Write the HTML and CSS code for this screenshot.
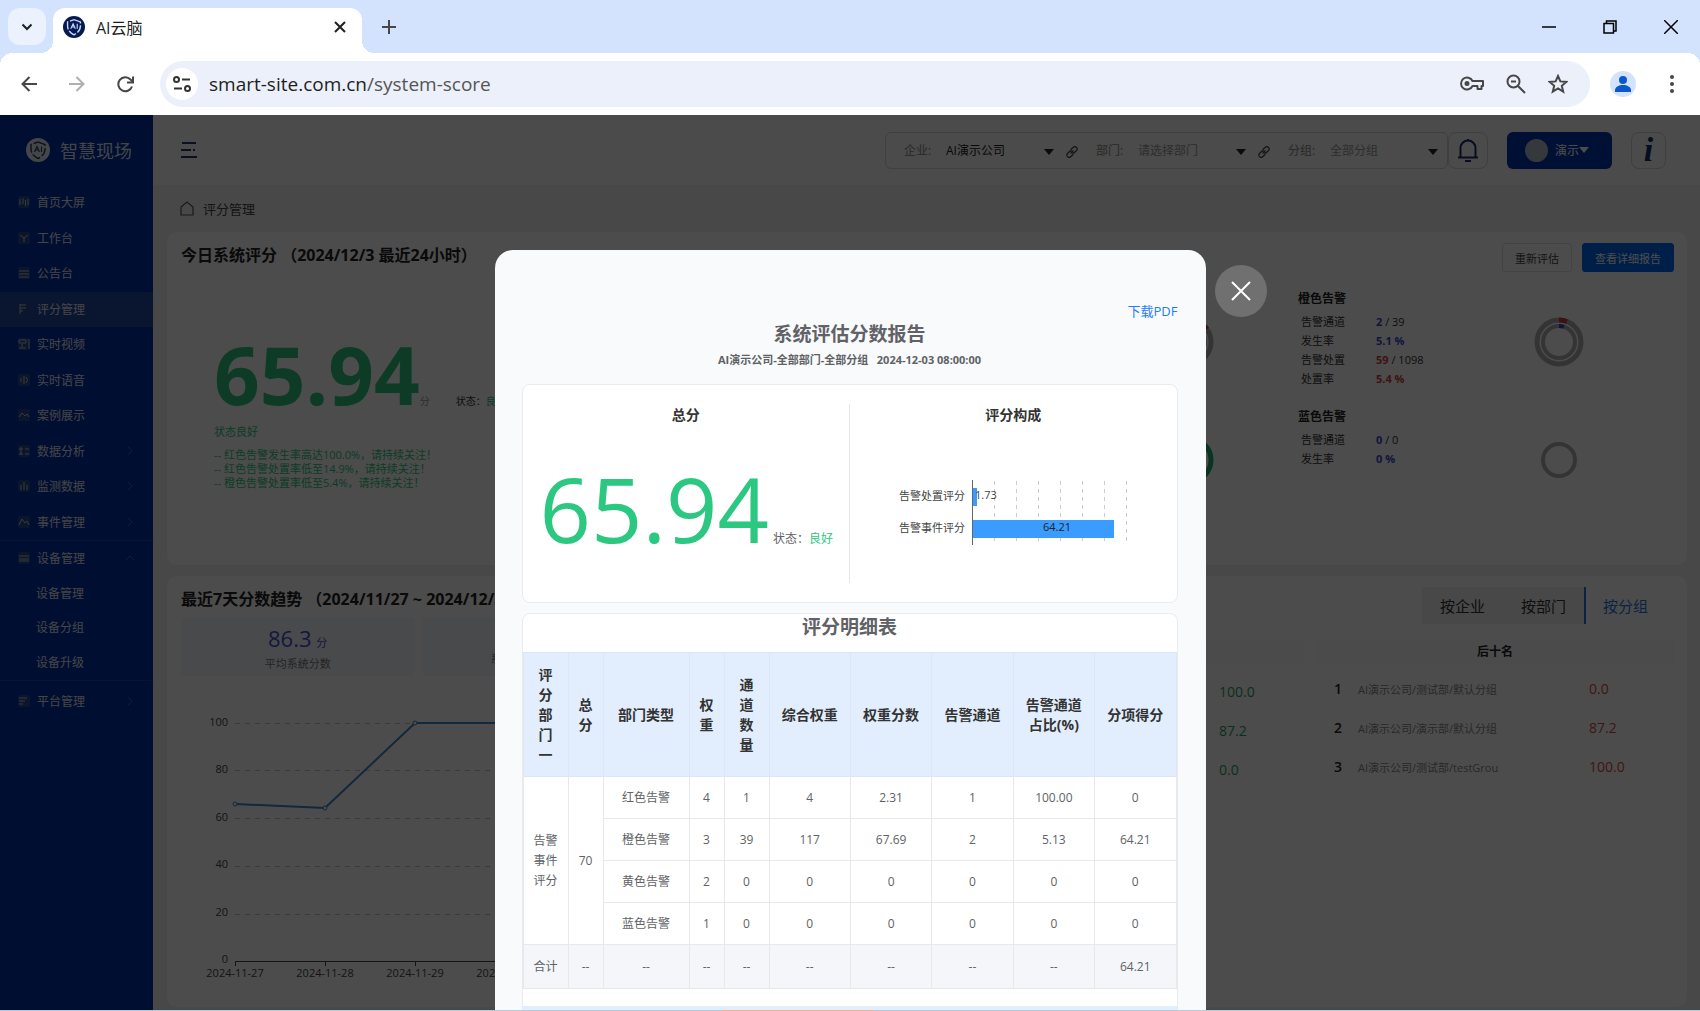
FILE: index.html
```html
<!DOCTYPE html>
<html lang="zh-CN">
<head>
    <meta charset="UTF-8">
    <meta name="viewport" content="width=device-width, initial-scale=1.0">
    <title>AI云脑</title>
    <link rel="stylesheet" href="styles.css">
</head>
<body>
    <svg width="0" height="0" class="defs">
        <symbol id="shield" viewBox="0 0 24 24">
            <path d="M12 4 19 6.500V11c0 4.500-3 7.500-7 9.500-4-2-7-5-7-9.500V6.500z" fill="none" stroke="currentColor" stroke-width="1.500" stroke-dasharray="9 2"/>
            <path d="M8.500 14 11 8.500l2.500 5.500M9.500 12h3M15.500 8.500V14" fill="none" stroke="currentColor" stroke-width="1.200"/>
        </symbol>
        <symbol id="link" viewBox="0 0 12 12">
            <path d="M5 7 7 5M5 3.500 7 1.500a2 2 0 0 1 3.500 3L8.500 6.500a2 2 0 0 1-2 .5M7 8.500 5 10.500a2 2 0 0 1-3.500-3L3.500 5.500a2 2 0 0 1 2-.5" fill="none" stroke="currentColor" stroke-width="1.200" stroke-linecap="round"/>
        </symbol>
        <symbol id="caret" viewBox="0 0 10 6"><path d="M0 0h10L5 6z" fill="currentColor"/></symbol>
        <symbol id="chev" viewBox="0 0 10 10"><path d="M3 1l4 4-4 4" fill="none" stroke="currentColor"/></symbol>
    </svg>

    <!-- browser -->
    <div class="tabstrip">
        <button class="tab-search" aria-label="搜索标签页">
            <svg width="12" height="8" viewBox="0 0 12 8"><path d="M1.500 1.500 6 6l4.500-4.500" fill="none" stroke="#1f1f1f" stroke-width="2"/></svg>
        </button>
        <div class="tab">
            <svg class="favicon" width="22" height="22" viewBox="0 0 24 24"><circle cx="12" cy="12" r="12" fill="#061a4f"/><use href="#shield" color="#c5d7ff"/></svg>
            <span class="tab-title">AI云脑</span>
            <button class="plain" aria-label="关闭标签页">
                <svg width="12" height="12" viewBox="0 0 12 12"><path d="M1 1l10 10M11 1 1 11" stroke="#1f1f1f" stroke-width="2"/></svg>
            </button>
        </div>
        <button class="plain new-tab" aria-label="新标签页">
            <svg width="14" height="14" viewBox="0 0 14 14"><path d="M7 0v14M0 7h14" stroke="#474747" stroke-width="2"/></svg>
        </button>
        <div class="win-controls">
            <button class="plain" aria-label="最小化"><svg width="14" height="14" viewBox="0 0 14 14"><path d="M0 7h14" stroke="#000" stroke-width="1.500"/></svg></button>
            <button class="plain" aria-label="还原"><svg width="14" height="14" viewBox="0 0 14 14"><path d="M1 3.500h9.500V13H1zM3.500 3.500V1H13v10h-2.500" fill="none" stroke="#000" stroke-width="1.500"/></svg></button>
            <button class="plain" aria-label="关闭"><svg width="14" height="14" viewBox="0 0 14 14"><path d="M0 0l14 14M14 0 0 14" stroke="#000" stroke-width="1.500"/></svg></button>
        </div>
    </div>
    <div class="toolbar">
        <button class="plain nav" aria-label="后退"><svg width="16" height="16" viewBox="0 0 16 16"><path d="M16 8H2M8.500 1 1.500 8l7 7" fill="none" stroke="#474747" stroke-width="2"/></svg></button>
        <button class="plain nav" aria-label="前进"><svg width="16" height="16" viewBox="0 0 16 16"><path d="M0 8h14M7.500 1l7 7-7 7" fill="none" stroke="#b0b0b0" stroke-width="2"/></svg></button>
        <button class="plain nav" aria-label="刷新"><svg width="17" height="17" viewBox="0 0 17 17"><path d="M15 10.500a7 7 0 1 1-1.500-7L15 5M16 .5v6h-6" fill="none" stroke="#474747" stroke-width="2"/></svg></button>
        <div class="omnibox">
            <button class="site-info" aria-label="网站信息">
                <svg width="18" height="16" viewBox="0 0 18 16" fill="none" stroke="#333" stroke-width="2"><circle cx="3.500" cy="3.500" r="2.500"/><path d="M9 3.500h8M1 12.500h8"/><circle cx="14.500" cy="12.500" r="2.500"/></svg>
            </button>
            <div class="url">smart-site.com.cn<span>/system-score</span></div>
            <svg width="24" height="16" viewBox="0 0 24 16" fill="none" stroke="#474747" stroke-width="2"><path d="M12.500 5H23v5h-1.500v3h-4v-3h-5a6 6 0 1 1 0-5z" stroke-linejoin="round"/><circle cx="7" cy="7.500" r="1.500" fill="#474747"/></svg>
            <svg width="20" height="20" viewBox="0 0 20 20" fill="none" stroke="#474747" stroke-width="2"><circle cx="7.500" cy="7.500" r="6"/><path d="M12 12l7 7M5 7.500h5"/></svg>
            <svg width="20" height="20" viewBox="0 0 20 20" fill="none" stroke="#474747" stroke-width="2"><path d="M10 2l2.400 5.400 5.900.5-4.500 3.900 1.400 5.800L10 14.500l-5.200 3.100 1.400-5.800L1.700 7.900l5.900-.5z"/></svg>
        </div>
        <button class="profile" aria-label="个人资料"><svg width="16" height="18" viewBox="0 0 16 18" fill="#0b57d0"><circle cx="8" cy="5" r="4"/><path d="M0 17v-2c0-3 4-5 8-5s8 2 8 5v2z"/></svg></button>
        <button class="plain" aria-label="菜单"><svg width="6" height="20" viewBox="0 0 6 20" fill="#474747"><circle cx="3" cy="3" r="2"/><circle cx="3" cy="10" r="2"/><circle cx="3" cy="17" r="2"/></svg></button>
    </div>

    <div class="app">
        <aside class="sidebar">
            <div class="brand">
                <svg width="24" height="24" viewBox="0 0 24 24"><circle cx="12" cy="12" r="12" fill="#e8ecf8"/><use href="#shield" color="#33415f"/></svg>
                <span>智慧现场</span>
            </div>
            <nav>
                <div class="menu menu-main">
                    <a href="#"><svg class="ico" viewBox="0 0 12 12"><path d="M2 3v6M5 2v6M7.500 4v6M10 3v6"/></svg>首页大屏</a>
                    <a href="#"><svg class="ico" viewBox="0 0 12 12"><path d="M2 3l4 3 4-3M6 6v4"/></svg>工作台</a>
                    <a href="#"><svg class="ico" viewBox="0 0 12 12"><path d="M1 4h10M1 7h10M1 10h10"/></svg>公告台</a>
                    <a href="#" class="active"><svg class="ico" viewBox="0 0 12 12"><path d="M2 2h6M2 5h6M2 8h3M2 1v10"/></svg>评分管理</a>
                    <a href="#"><svg class="ico" viewBox="0 0 12 12"><path d="M1 2h7v3H1zM1 10h7M11 1v10M4 6v3"/></svg>实时视频</a>
                    <a href="#"><svg class="ico" viewBox="0 0 12 12"><path d="M3 4v4M6 2v8M8 3q3 3 0 6"/></svg>实时语音</a>
                    <a href="#"><svg class="ico" viewBox="0 0 12 12"><path d="M1 8l3-4 3 3 2-2 2 3"/></svg>案例展示</a>
                    <a href="#"><svg class="ico" viewBox="0 0 12 12"><path d="M1 4h4M7 4h4M1 9h4M7 9h4M3 2v8"/></svg>数据分析<svg class="chev"><use href="#chev"/></svg></a>
                    <a href="#"><svg class="ico" viewBox="0 0 12 12"><path d="M3 5v5M6 2v8M9 5v5"/></svg>监测数据<svg class="chev"><use href="#chev"/></svg></a>
                    <a href="#"><svg class="ico" viewBox="0 0 12 12"><path d="M1 9l3-6 3 4 2-2 2 4"/></svg>事件管理<svg class="chev"><use href="#chev"/></svg></a>
                </div>
                <div class="menu menu-device">
                    <a href="#"><svg class="ico" viewBox="0 0 12 12"><path d="M1 4h10M1 7h10M1 9h10"/></svg>设备管理<svg class="chev up"><use href="#chev"/></svg></a>
                    <a href="#" class="sub">设备管理</a>
                    <a href="#" class="sub">设备分组</a>
                    <a href="#" class="sub">设备升级</a>
                </div>
                <div class="menu menu-platform">
                    <a href="#"><svg class="ico" viewBox="0 0 12 12"><path d="M1 3h8M1 6h6M1 9h4"/></svg>平台管理<svg class="chev"><use href="#chev"/></svg></a>
                </div>
            </nav>
        </aside>

        <main class="main">
            <header class="topbar">
                <button class="plain burger" aria-label="折叠菜单"><svg width="16" height="16" viewBox="0 0 16 16" stroke="#26366f" stroke-width="2"><path d="M1 1h14M0 8h10M12 8h2M0 15h16"/></svg></button>
                <div class="filters">
                    <label for="company">企业:</label>
                    <select id="company" class="chosen"><option>AI演示公司</option></select>
                    <svg class="caret"><use href="#caret"/></svg>
                    <svg class="link"><use href="#link"/></svg>
                    <label for="dept">部门:</label>
                    <select id="dept"><option>请选择部门</option></select>
                    <svg class="caret"><use href="#caret"/></svg>
                    <svg class="link"><use href="#link"/></svg>
                    <label for="group">分组:</label>
                    <select id="group"><option>全部分组</option></select>
                    <svg class="caret"><use href="#caret"/></svg>
                </div>
                <button class="box-btn bell" aria-label="通知"><svg width="22" height="24" viewBox="0 0 22 24" fill="none" stroke="#1e2a66" stroke-width="2"><path d="M1 19.500h20M3.500 19V10a7.500 7.500 0 0 1 15 0v9M8 23h6M11 3V1"/></svg></button>
                <button class="user"><span class="avatar"></span>演示<svg class="caret"><use href="#caret"/></svg></button>
                <button class="box-btn info" aria-label="帮助">i</button>
            </header>

            <div class="crumb">
                <svg width="14" height="15" viewBox="0 0 14 15"><path d="M1 6l6-5 6 5v8H1z" fill="none" stroke="#555" stroke-width="1.200"/></svg>
                <span>评分管理</span>
            </div>

            <section class="card today">
                <div class="card-head">
                    <h2>今日系统评分 （2024/12/3 最近24小时）</h2>
                    <div class="actions">
                        <button class="btn">重新评估</button>
                        <button class="btn primary">查看详细报告</button>
                    </div>
                </div>
                <div class="today-body">
                    <div class="score">
                        <div class="score-line"><strong>65.94</strong><small>分</small><span>状态：<em>良好</em></span></div>
                        <p class="state">状态良好</p>
                        <ul>
                            <li>-- 红色告警发生率高达100.0%，请持续关注！</li>
                            <li>-- 红色告警处置率低至14.9%，请持续关注！</li>
                            <li>-- 橙色告警处置率低至5.4%，请持续关注！</li>
                        </ul>
                    </div>
                    <div class="alarms">
                        <div class="alarm">
                            <svg class="ring" width="50" height="50" viewBox="0 0 50 50" fill="none">
                                <circle cx="25" cy="25" r="22" stroke="#b0b0b0" stroke-width="5"/><circle cx="25" cy="25" r="16" stroke="#b0b0b0" stroke-width="4"/>
                                <path d="M25 3a22 22 0 0 1 18 9" stroke="#b04a50" stroke-width="5"/>
                            </svg>
                        </div>
                        <div class="alarm">
                            <svg class="ring" width="50" height="50" viewBox="0 0 50 50" fill="none"><circle cx="25" cy="25" r="22" stroke="#1fae72" stroke-width="5"/></svg>
                        </div>
                    </div>
                    <div class="alarms">
                        <div class="alarm">
                            <div>
                                <h3>橙色告警</h3>
                                <dl>
                                    <dt>告警通道</dt><dd><b>2</b> / 39</dd>
                                    <dt>发生率</dt><dd><b>5.1 %</b></dd>
                                    <dt>告警处置</dt><dd><b class="red">59</b> / 1098</dd>
                                    <dt>处置率</dt><dd><b class="red">5.4 %</b></dd>
                                </dl>
                            </div>
                            <svg class="ring" width="50" height="50" viewBox="0 0 50 50" fill="none">
                                <circle cx="25" cy="25" r="22" stroke="#b0b0b0" stroke-width="5"/><circle cx="25" cy="25" r="16" stroke="#b0b0b0" stroke-width="4"/>
                                <path d="M25 3q4 0 8 1.500" stroke="#d23b3b" stroke-width="5"/><path d="M25 9q2.500 0 5 1" stroke="#3a48d0" stroke-width="4"/>
                            </svg>
                        </div>
                        <div class="alarm">
                            <div>
                                <h3>蓝色告警</h3>
                                <dl>
                                    <dt>告警通道</dt><dd><b>0</b> / 0</dd>
                                    <dt>发生率</dt><dd><b>0 %</b></dd>
                                </dl>
                            </div>
                            <svg class="ring" width="50" height="50" viewBox="0 0 50 50" fill="none"><circle cx="25" cy="25" r="16" stroke="#b0b0b0" stroke-width="4"/></svg>
                        </div>
                    </div>
                </div>
            </section>

            <section class="card week">
                <div class="trend">
                    <h2>最近7天分数趋势 （2024/11/27 ~ 2024/12/3）</h2>
                    <div class="tiles">
                        <div class="tile"><div><b>86.3</b> 分</div><span>平均系统分数</span></div>
                        <div class="tile"><span class="low">系统分数最高的日期</span></div>
                        <div class="tile"></div>
                    </div>
                    <svg class="line-chart">
                        <g stroke="#c4c4c4" stroke-dasharray="5 5">
                            <path d="M54 47.500H700M54 94.500H700M54 142.500H700M54 190.500H700M54 238.500H700"/>
                        </g>
                        <path d="M54.500 290v-4.500H700M144.500 286v4M234.500 286v4M324.500 286v4" fill="none" stroke="#444"/>
                        <g text-anchor="end">
                            <text x="47" y="50">100</text><text x="47" y="97">80</text><text x="47" y="145">60</text>
                            <text x="47" y="192">40</text><text x="47" y="240">20</text><text x="47" y="287">0</text>
                        </g>
                        <g text-anchor="middle">
                            <text x="54" y="301">2024-11-27</text><text x="144" y="301">2024-11-28</text>
                            <text x="234" y="301">2024-11-29</text><text x="324" y="301">2024-11-30</text>
                        </g>
                        <path d="M54 128l90 4 90-85h90" fill="none" stroke="#3f86c8" stroke-width="2"/>
                        <g fill="#fff" stroke="#3f86c8"><circle cx="54" cy="128" r="2"/><circle cx="144" cy="132" r="2"/><circle cx="234" cy="47" r="2"/></g>
                    </svg>
                </div>
                <div class="rank">
                    <div class="tabs">
                        <button>按企业</button><button>按部门</button><button class="on">按分组</button>
                    </div>
                    <div class="lists">
                        <div class="list best">
                            <h4>前十名</h4>
                            <ol>
                                <li><i>1</i><span></span><b>100.0</b></li>
                                <li><i>2</i><span></span><b>87.2</b></li>
                                <li><i>3</i><span></span><b>0.0</b></li>
                            </ol>
                        </div>
                        <div class="list worst">
                            <h4>后十名</h4>
                            <ol>
                                <li><i>1</i><span>AI演示公司/测试部/默认分组</span><b>0.0</b></li>
                                <li><i>2</i><span>AI演示公司/演示部/默认分组</span><b>87.2</b></li>
                                <li><i>3</i><span>AI演示公司/测试部/testGrou</span><b>100.0</b></li>
                            </ol>
                        </div>
                    </div>
                </div>
            </section>
        </main>

        <div class="overlay">
            <div class="modal" role="dialog" aria-labelledby="report-title">
                <button class="close" aria-label="关闭报告"><svg width="20" height="20" viewBox="0 0 20 20"><path d="M1 1l18 18M19 1 1 19" stroke="#fff" stroke-width="2"/></svg></button>
                <a href="#" class="download">下载PDF</a>
                <h1 id="report-title">系统评估分数报告</h1>
                <p class="subtitle">AI演示公司-全部部门-全部分组 &nbsp; 2024-12-03 08:00:00</p>

                <div class="panel summary">
                    <div class="half">
                        <h3>总分</h3>
                        <div class="total"><strong>65.94</strong><span>状态：<em>良好</em></span></div>
                    </div>
                    <div class="half">
                        <h3>评分构成</h3>
                        <svg class="bar-chart" width="240" height="70" viewBox="0 0 240 70">
                            <path d="M104.500 2v62M126.500 2v62M148.500 2v62M170.500 2v62M192.500 2v62M214.500 2v62M236.500 2v62" stroke="#ccc" stroke-dasharray="4 4"/>
                            <rect x="83" y="9" width="4" height="18" fill="#3a9cff"/>
                            <rect x="83" y="41" width="141" height="18" fill="#3a9cff"/>
                            <path d="M82.500 1v65" stroke="#666"/>
                            <g text-anchor="end"><text x="75" y="21">告警处置评分</text><text x="75" y="53">告警事件评分</text></g>
                            <text x="85" y="20">1.73</text>
                            <text x="167" y="52" text-anchor="middle" class="on-bar">64.21</text>
                        </svg>
                    </div>
                </div>

                <div class="panel detail">
                    <h1>评分明细表</h1>
                    <table>
                        <colgroup>
                            <col class="c-m"><col class="c-s"><col class="c-l"><col class="c-s"><col class="c-m">
                            <col><col><col><col><col>
                        </colgroup>
                        <thead>
                            <tr>
                                <th>评分部门一</th><th>总分</th><th>部门类型</th><th>权重</th><th>通道数量</th>
                                <th>综合权重</th><th>权重分数</th><th>告警通道</th><th>告警通道占比(%)</th><th>分项得分</th>
                            </tr>
                        </thead>
                        <tbody>
                            <tr>
                                <td rowspan="4">告警事件评分</td><td rowspan="4">70</td>
                                <td>红色告警</td><td>4</td><td>1</td><td>4</td><td>2.31</td><td>1</td><td>100.00</td><td>0</td>
                            </tr>
                            <tr><td>橙色告警</td><td>3</td><td>39</td><td>117</td><td>67.69</td><td>2</td><td>5.13</td><td>64.21</td></tr>
                            <tr><td>黄色告警</td><td>2</td><td>0</td><td>0</td><td>0</td><td>0</td><td>0</td><td>0</td></tr>
                            <tr><td>蓝色告警</td><td>1</td><td>0</td><td>0</td><td>0</td><td>0</td><td>0</td><td>0</td></tr>
                            <tr class="sum"><td>合计</td><td>--</td><td>--</td><td>--</td><td>--</td><td>--</td><td>--</td><td>--</td><td>--</td><td>64.21</td></tr>
                        </tbody>
                    </table>
                    <div class="next-table"></div>
                </div>
            </div>
        </div>
    </div>
    <div class="taskbar"><span></span></div>
</body>
</html>
```

FILE: styles.css
```css
* {
    box-sizing: border-box;
}
body {
    margin: 0;
    height: 100vh;
    display: flex;
    flex-direction: column;
    overflow: hidden;
    font-family: "Open Sans", "Noto Sans CJK SC", sans-serif;
    font-size: 12px;
    color: #333;
}
h1, h2, h3, h4, p, ul, ol, dl, dd {
    margin: 0;
    padding: 0;
    list-style: none;
}
button, select {
    font: inherit;
    color: inherit;
    border: none;
    padding: 0;
    cursor: pointer;
}
a {
    text-decoration: none;
}
em, i {
    font-style: normal;
}
svg {
    flex: none;
    display: block;
}
.defs {
    position: absolute;
}
.plain {
    background: none;
}

/* browser */
.tabstrip {
    height: 53px;
    flex: none;
    display: flex;
    align-items: center;
    background: #d3e3fd;
    padding: 0 22px 0 8px;
}
.tab-search {
    width: 38px;
    height: 37px;
    border-radius: 12px;
    background: #ebf1fd;
    display: flex;
    align-items: center;
    justify-content: center;
}
.tab {
    position: relative;
    align-self: flex-end;
    width: 309px;
    height: 45px;
    margin-left: 7px;
    padding: 0 16px 8px 10px;
    display: flex;
    align-items: center;
    background: #fff;
    border-radius: 12px 12px 0 0;
}
/* curved feet of the active tab */
.tab::before, .tab::after {
    content: "";
    position: absolute;
    bottom: 0;
    width: 12px;
    height: 12px;
}
.tab::before {
    right: 100%;
    background: radial-gradient(circle at 0 0, transparent 12px, #fff 12px);
}
.tab::after {
    left: 100%;
    background: radial-gradient(circle at 100% 0, transparent 12px, #fff 12px);
}
.tab-title {
    flex: 1;
    margin-left: 11px;
    font-size: 16px;
    color: #1f1f1f;
}
.new-tab {
    margin-left: 20px;
}
.win-controls {
    margin-left: auto;
    display: flex;
    gap: 47px;
}
.toolbar {
    height: 62px;
    flex: none;
    display: flex;
    align-items: center;
    padding: 0 25px 0 5px;
    background: radial-gradient(circle at 12px 12px, #fff 12px, transparent 12px) 0 0 / 12px 12px no-repeat,
        radial-gradient(circle at 0 12px, #fff 12px, transparent 12px) 100% 0 / 12px 12px no-repeat,
        linear-gradient(#fff, #fff) 12px 0 / calc(100% - 24px) 12px no-repeat,
        linear-gradient(#d3e3fd 12px, #fff 12px);
}
.toolbar .nav {
    width: 48px;
    display: flex;
    justify-content: center;
}
.omnibox {
    flex: 1;
    height: 46px;
    margin: 0 20px 0 11px;
    padding: 0 22px 0 6px;
    display: flex;
    align-items: center;
    gap: 22px;
    background: #ebf0fa;
    border-radius: 23px;
}
.site-info {
    width: 32px;
    height: 32px;
    border-radius: 50%;
    background: #fff;
    display: flex;
    align-items: center;
    justify-content: center;
}
.url {
    flex: 1;
    margin-left: -11px;
    font-size: 19px;
    color: #1f1f1f;
}
.url span {
    color: #555;
}
.profile {
    width: 26px;
    height: 26px;
    margin-right: 33px;
    border-radius: 50%;
    background: #d3e3fd;
    display: flex;
    align-items: center;
    justify-content: center;
}

/* app */
.app {
    position: relative;
    flex: 1;
    min-height: 0;
    display: flex;
    background: #f2f2f2;
}
.sidebar {
    width: 153px;
    flex: none;
    background: #0030a4;
    color: #dde3f2;
}
.brand {
    height: 69px;
    display: flex;
    align-items: center;
    gap: 10px;
    padding-left: 26px;
    margin-bottom: 1px;
    font-size: 18px;
}
.menu {
    display: flex;
    flex-direction: column;
}
.menu a {
    flex: 1;
    display: flex;
    align-items: center;
    padding: 0 18px 1px;
    color: #e4e6ec;
    font-size: 12px;
}
.menu a.sub {
    padding-left: 36px;
}
.menu a.active {
    background: #2448a0;
}
.menu-main {
    height: 355px;
}
.menu-device {
    height: 141px;
    border-top: 1px solid #1f48a4;
    border-bottom: 1px solid #1f48a4;
}
.menu-platform {
    height: 40px;
}
.ico {
    width: 12px;
    height: 12px;
    margin-right: 7px;
    background: #2b4a90;
    border-radius: 2px;
    fill: none;
    stroke: #b9c2d9;
}
.chev {
    width: 10px;
    height: 10px;
    margin-left: auto;
    color: #4562ac;
}
.chev.up {
    transform: rotate(-90deg);
}
.main {
    flex: 1;
    min-width: 0;
    display: flex;
    flex-direction: column;
}
.topbar {
    height: 70px;
    flex: none;
    display: flex;
    align-items: center;
    padding: 0 34px 0 28px;
    background: #fafafa;
}
.filters {
    height: 37px;
    margin-left: auto;
    padding: 0 9px 0 18px;
    display: flex;
    align-items: center;
    border: 1px solid #d4d4d4;
    border-radius: 6px;
    color: #888;
}
.filters label {
    width: 42px;
}
.filters select {
    width: 98px;
    appearance: none;
    background: none;
    color: #999;
}
.filters select.chosen {
    color: #222;
}
.caret {
    width: 10px;
    height: 6px;
    color: #222;
}
.filters .caret {
    margin-top: 4px;
}
.link {
    width: 12px;
    height: 12px;
    margin: 4px 18px 0 12px;
    color: #444;
}
.box-btn {
    height: 37px;
    border: 1px solid #d4d4d4;
    border-radius: 8px;
    background: none;
    display: flex;
    align-items: center;
    justify-content: center;
}
.bell {
    width: 40px;
}
.user {
    width: 105px;
    height: 37px;
    margin: 0 19px;
    padding-left: 18px;
    display: flex;
    align-items: center;
    background: #0034b0;
    color: #fff;
    border-radius: 6px;
}
.user .caret {
    color: #fff;
}
.avatar {
    width: 23px;
    height: 23px;
    margin-right: 7px;
    border-radius: 50%;
    background: #b3bfc8;
}
.info {
    width: 35px;
    font: italic bold 34px "Liberation Serif", serif;
    color: #0e2f66;
}
.crumb {
    height: 47px;
    flex: none;
    display: flex;
    align-items: center;
    gap: 9px;
    padding-left: 27px;
    font-size: 13px;
    color: #444;
}
.card {
    margin: 0 13px 11px 14px;
    padding: 11px 13px 0 14px;
    background: #fff;
    border-radius: 10px;
}
.card h2 {
    font-size: 16px;
    line-height: 24px;
    color: #222;
}
.today {
    height: 333px;
    flex: none;
}
.card-head {
    display: flex;
    justify-content: space-between;
    height: 45px;
}
.actions {
    display: flex;
    gap: 10px;
}
.btn {
    height: 29px;
    padding: 0 12px;
    border: 1px solid #e2e2e2;
    border-radius: 3px;
    background: #fff;
    font-size: 11px;
    color: #444;
}
.btn.primary {
    background: #0068f0;
    border-color: #0068f0;
    color: #fff;
}
.today-body {
    display: grid;
    grid-template-columns: 1fr 370px 370px;
    padding-right: 6px;
}
.score {
    padding: 46px 0 0 33px;
    font-size: 11px;
    color: #2cc780;
}
.score-line {
    display: flex;
    align-items: baseline;
    height: 90px;
}
.score-line strong {
    font-size: 80px;
    line-height: 80px;
}
.score-line small {
    font-size: 10px;
    color: #999;
}
.score-line span {
    margin-left: 26px;
    font-size: 10px;
    color: #333;
}
.score-line em, .total em {
    color: #2cc780;
}
.state {
    line-height: 16px;
}
.score ul {
    margin-top: 8px;
}
.score li {
    line-height: 14px;
}
.alarm {
    height: 118px;
    display: flex;
    justify-content: space-between;
}
.ring {
    margin: 29px 84px 0 auto;
}
.alarm h3 {
    font-size: 12px;
    line-height: 22px;
    color: #222;
}
.alarm dl {
    display: grid;
    grid-template-columns: 75px 1fr;
    padding-left: 3px;
    margin-top: 2px;
    font-size: 11px;
    line-height: 19px;
}
.alarm b {
    color: #3a48c8;
}
.alarm .red {
    color: #d04040;
}
.week {
    flex: 1;
    margin-bottom: 3px;
    display: grid;
    grid-template-columns: 1fr 1fr;
    gap: 37px;
}
.tiles {
    display: grid;
    grid-template-columns: 1fr 1fr 1fr;
    gap: 9px;
    height: 58px;
    margin-top: 7px;
    padding-right: 10px;
}
.tile {
    background: #f6f7fc;
    text-align: center;
    font-size: 11px;
    color: #4a4fd0;
    padding-top: 6px;
}
.tile b {
    margin-right: 2px;
    font-size: 22px;
    font-weight: 400;
}
.tile div {
    line-height: 28px;
}
.tile span {
    display: block;
    line-height: 14px;
    color: #777;
}
.tile .low {
    margin-top: 28px;
}
.line-chart {
    width: 100%;
    height: 320px;
    font-size: 11px;
    fill: #444;
}
.tabs {
    display: flex;
    justify-content: flex-end;
    padding-right: 9px;
}
.tabs button {
    width: 81px;
    height: 37px;
    background: #f0f0f0;
    font-size: 15px;
}
.tabs .on {
    background: #fff;
    border-left: 2px solid #2d74e0;
    color: #2d74e0;
}
.lists {
    display: grid;
    grid-template-columns: 1fr 1fr;
    gap: 12px;
    margin-top: 16px;
}
.list h4 {
    font-size: 12px;
    line-height: 24px;
    text-align: center;
    background: #fbfbfb;
    color: #222;
}
.list ol {
    padding: 5px 0 0 18px;
}
.best ol {
    padding-top: 8px;
}
.list li {
    display: grid;
    grid-template-columns: 24px 1fr 85px;
    align-items: center;
    height: 39px;
    font-size: 11px;
    color: #888;
}
.list i {
    font-size: 14px;
    font-weight: 600;
    color: #222;
}
.list b {
    font-size: 14px;
    font-weight: 500;
    color: #d84a4a;
}
.list.best b {
    color: #1f9e68;
}

/* report dialog */
.overlay {
    position: absolute;
    inset: 0;
    display: flex;
    justify-content: center;
    padding-top: 135px;
    background: rgba(0, 0, 0, 0.7);
    overflow: hidden;
}
.modal {
    position: relative;
    width: 711px;
    height: 1000px;
    flex: none;
    padding: 51px 28px 0 27px;
    background: #f9fafc;
    border-radius: 18px;
    color: #606266;
    text-align: center;
}
.close {
    position: absolute;
    top: 15px;
    right: -61px;
    width: 52px;
    height: 52px;
    border-radius: 50%;
    background: #707070;
    display: flex;
    align-items: center;
    justify-content: center;
}
.download {
    display: block;
    text-align: right;
    font-size: 13px;
    line-height: 20px;
    color: #1f7bff;
}
.modal h1 {
    font-size: 19px;
    line-height: 26px;
}
.subtitle {
    font-size: 11px;
    font-weight: 700;
    line-height: 26px;
    margin-bottom: 11px;
}
.panel {
    background: #fff;
    border: 1px solid #e9ebef;
    border-radius: 8px;
}
.summary {
    display: flex;
    height: 219px;
    padding: 19px 0;
}
.half {
    flex: 1;
}
.half + .half {
    border-left: 1px solid #e4e6ea;
}
.half h3 {
    font-size: 14px;
    line-height: 22px;
    color: #333;
}
.total {
    display: flex;
    align-items: baseline;
    gap: 4px;
    padding: 27px 0 0 17px;
}
.total strong {
    font-size: 90px;
    line-height: 110px;
    font-weight: 400;
    color: #2cc780;
}
.bar-chart {
    margin: 53px 0 0 40px;
    font-size: 11px;
    fill: #444;
}
.on-bar {
    fill: #222;
}
.detail {
    height: 600px;
    margin-top: 10px;
}
.detail h1 {
    padding-bottom: 12px;
}
table {
    width: 100%;
    table-layout: fixed;
    border-collapse: collapse;
    line-height: 20px;
}
.c-s {
    width: 35px;
}
.c-m {
    width: 45px;
}
.c-l {
    width: 86px;
}
th {
    height: 124px;
    padding: 0 10px;
    border: 1px solid #dbe7f6;
    background: #e2eefd;
    font-size: 14px;
    color: #333;
}
td {
    height: 42px;
    padding: 0 8px;
    border: 1px solid #e6e8ec;
}
.sum td {
    height: 44px;
    background: #f5f6fa;
}
.next-table {
    height: 120px;
    margin-top: 17px;
    background: #e2eefd;
}
.taskbar {
    height: 1px;
    flex: none;
    background: #b9c9d8;
    display: flex;
    justify-content: center;
}
.taskbar span {
    width: 150px;
    margin-right: 104px;
    background: #eeb48c;
}
```
